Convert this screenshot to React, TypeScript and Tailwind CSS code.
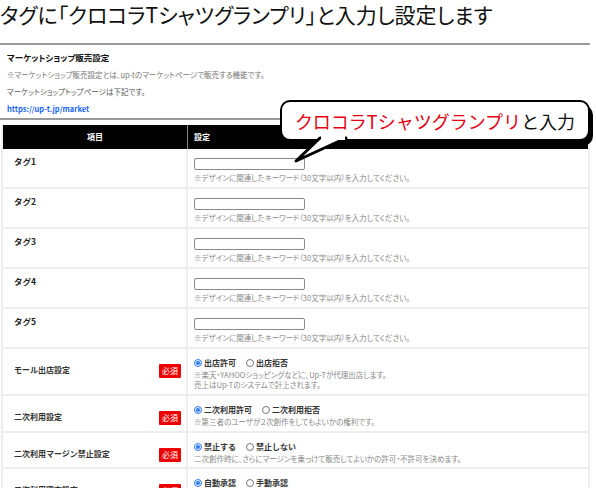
import React from 'react'

const font = { fontFamily: '"Noto Sans CJK JP", "Noto Sans", sans-serif' }

const HINT = '※デザインに関連したキーワード（30文字以内）を入力してください。'

function Radio({ checked, label }: { checked?: boolean; label: string }) {
  return (
    <span className="inline-flex items-center gap-[2px]">
      {checked ? (
        <span className="flex h-[8px] w-[8px] items-center justify-center rounded-full border border-[#2f7cf6] bg-[#e8f0ff]">
          <span className="h-[4px] w-[4px] rounded-full bg-[#2f7cf6]" />
        </span>
      ) : (
        <span className="h-[8px] w-[8px] rounded-full border border-[#777] bg-white" />
      )}
      <span className="font-bold text-[#333]">{label}</span>
    </span>
  )
}

function TagRow({ n }: { n: number }) {
  return (
    <div className="flex h-[40px] border-b-2 border-[#eeeeee]">
      <div className="w-[185px] shrink-0 border-r-2 border-[#eeeeee] pl-[11px] pt-[7px] text-[8.5px] font-bold leading-[10px] text-[#222]">
        タグ{n}
      </div>
      <div className="pl-[6px] pt-[9px]">
        <div className="h-[12px] w-[111px] rounded-[2px] border border-[#888] bg-white" />
        <div className="mt-[3px] text-[7.5px] leading-[10px] text-[#888] [font-feature-settings:'palt']">{HINT}</div>
      </div>
    </div>
  )
}

function ReqRow({
  label,
  h,
  options,
  hints,
}: {
  label: string
  h: string
  options: [string, string]
  hints: string[]
}) {
  return (
    <div className={`flex border-b-2 border-[#eeeeee] ${h}`}>
      <div className="flex w-[185px] shrink-0 items-start justify-between border-r-2 border-[#eeeeee] pl-[11px] pr-[5px] pt-[15px]">
        <span className="mt-[1px] text-[8px] font-bold leading-[10px] text-[#333]">{label}</span>
        <span className="flex h-[14px] w-[22px] items-center justify-center rounded-[1px] bg-[#ee0000] text-[8px] leading-none text-white">
          必須
        </span>
      </div>
      <div className="pl-[6px] pt-[9px] text-[8px] leading-[10px]">
        <div className="flex gap-[10px]">
          <Radio checked label={options[0]} />
          <Radio label={options[1]} />
        </div>
        <div className="mt-[2px] text-[7.5px] text-[#888] [font-feature-settings:'palt']">
          {hints.map(t => (
            <div key={t}>{t}</div>
          ))}
        </div>
      </div>
    </div>
  )
}

export default function App() {
  return (
    <div className="relative h-[488px] w-[596px] overflow-hidden bg-white" style={font}>
      <h1 className="pt-[2px] text-[21px] leading-[25px] text-[#111] [font-feature-settings:'palt']">
        タグに「クロコラTシャツグランプリ」と入力し設定します
      </h1>

      <div className="mt-[16px] w-[590px] border-t-2 border-[#999]">
        <div className="px-[7px] pt-[4px] text-[7.5px] leading-[17px] [font-feature-settings:'palt']">
          <p className="text-[8.5px] font-bold text-[#111]">マーケットショップ販売設定</p>
          <p className="text-[#777]">※マーケットショップ販売設定とは、up-tのマーケットページで販売する機能です。</p>
          <p className="text-[#555]">マーケットショップトップページは下記です。</p>
          <p className="font-bold text-[#1a66ff]">https://up-t.jp/market</p>
        </div>
        <div className="mt-[1px] border-t-2 border-[#999]" />

        <div className="mt-[5px] ml-[1px] border-l-2 border-r-2 border-[#eeeeee]">
          <div className="flex h-[24px] bg-black text-[8px] font-bold leading-[24px] text-white">
            <div className="w-[185px] shrink-0 border-r border-[#888] text-center">項目</div>
            <div className="pl-[6px]">設定</div>
          </div>
          <TagRow n={1} />
          <TagRow n={2} />
          <TagRow n={3} />
          <TagRow n={4} />
          <TagRow n={5} />
          <ReqRow
            label="モール出店設定"
            h="h-[47px]"
            options={['出店許可', '出店拒否']}
            hints={['※楽天・YAHOOショッピングなどに、Up-Tが代理出店します。', '売上はUp-Tのシステムで計上されます。']}
          />
          <ReqRow
            label="二次利用設定"
            h="h-[37px]"
            options={['二次利用許可', '二次利用拒否']}
            hints={['※第三者のユーザが２次創作をしてもよいかの権利です。']}
          />
          <ReqRow
            label="二次利用マージン禁止設定"
            h="h-[36px]"
            options={['禁止する', '禁止しない']}
            hints={['二次創作時に、さらにマージンを乗っけて販売してよいかの許可・不許可を決めます。']}
          />
          <ReqRow
            label="二次利用審査設定"
            h="h-[40px]"
            options={['自動承認', '手動承認']}
            hints={['']}
          />
        </div>
      </div>

      {/* callout */}
      <div className="absolute left-[280px] top-[100px] flex h-[41px] w-[310px] items-center justify-center rounded-[10px] border-2 border-black bg-white text-[18px] leading-none shadow-[3px_5px_0_#000]">
        <span className="text-[#e60012]">クロコラTシャツグランプリ</span>
        <span className="text-[#111]">と入力</span>
      </div>
      <svg className="absolute left-[290px] top-[134px]" width="70" height="32" viewBox="0 0 70 32">
        <polygon points="30,4 6,27 56,4" fill="white" stroke="black" strokeWidth="3" strokeLinejoin="round" />
        <rect x="31" y="0" width="24" height="6" fill="white" />
      </svg>
    </div>
  )
}
